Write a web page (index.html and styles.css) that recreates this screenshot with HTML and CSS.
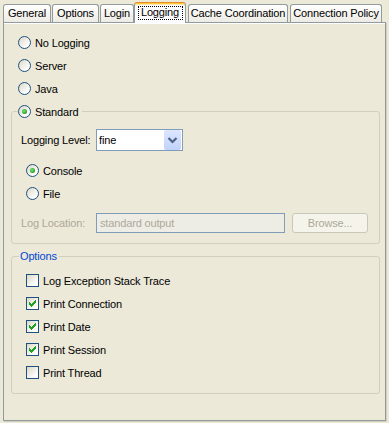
FILE: index.html
```html
<!DOCTYPE html>
<html>
<head>
<meta charset="utf-8">
<link rel="stylesheet" href="styles.css">
</head>
<body>
<div class="dialog">
  <div class="tabs">
    <div class="tab t-general">General</div>
    <div class="tab t-options">Options</div>
    <div class="tab t-login">Login</div>
    <div class="tab selected t-logging"><span class="focus">Logging</span></div>
    <div class="tab t-cache">Cache Coordination</div>
    <div class="tab t-conn">Connection Policy</div>
  </div>
  <div class="panel">
    <div class="row"><span class="radio"></span><span>No Logging</span></div>
    <div class="row"><span class="radio"></span><span>Server</span></div>
    <div class="row"><span class="radio"></span><span>Java</span></div>
    <fieldset class="group std">
      <legend class="row legend-radio"><span class="radio checked"></span><span>Standard</span></legend>
      <div class="field-row level">
        <label class="field-label">Logging Level:</label>
        <div class="combo">
          <span class="combo-text">fine</span>
          <span class="combo-btn"><svg width="17" height="20" viewBox="0 0 17 20"><path d="M4.5 8 L8.5 12 L12.5 8" fill="none" stroke="#4D6185" stroke-width="2.2"/></svg></span>
        </div>
      </div>
      <div class="row sub"><span class="radio checked"></span><span>Console</span></div>
      <div class="row sub"><span class="radio"></span><span>File</span></div>
      <div class="field-row location disabled">
        <label class="field-label">Log Location:</label>
        <div class="textbox">standard output</div>
        <div class="button">Browse...</div>
      </div>
    </fieldset>
    <fieldset class="group opts">
      <legend class="legend-text">Options</legend>
      <div class="row sub"><span class="check"></span><span>Log Exception Stack Trace</span></div>
      <div class="row sub"><span class="check"><svg class="tick" width="7" height="7" viewBox="0 0 7 7" shape-rendering="crispEdges"><path d="M6 0h1v1h-1z M5 1h2v1h-2z M0 2h1v1h-1z M4 2h3v1h-3z M0 3h2v1h-2z M3 3h3v1h-3z M0 4h5v1h-5z M1 5h3v1h-3z M2 6h1v1h-1z" fill="#21A121"/></svg></span><span>Print Connection</span></div>
      <div class="row sub"><span class="check"><svg class="tick" width="7" height="7" viewBox="0 0 7 7" shape-rendering="crispEdges"><path d="M6 0h1v1h-1z M5 1h2v1h-2z M0 2h1v1h-1z M4 2h3v1h-3z M0 3h2v1h-2z M3 3h3v1h-3z M0 4h5v1h-5z M1 5h3v1h-3z M2 6h1v1h-1z" fill="#21A121"/></svg></span><span>Print Date</span></div>
      <div class="row sub"><span class="check"><svg class="tick" width="7" height="7" viewBox="0 0 7 7" shape-rendering="crispEdges"><path d="M6 0h1v1h-1z M5 1h2v1h-2z M0 2h1v1h-1z M4 2h3v1h-3z M0 3h2v1h-2z M3 3h3v1h-3z M0 4h5v1h-5z M1 5h3v1h-3z M2 6h1v1h-1z" fill="#21A121"/></svg></span><span>Print Session</span></div>
      <div class="row sub"><span class="check"></span><span>Print Thread</span></div>
    </fieldset>
  </div>
</div>
</body>
</html>
```
FILE: styles.css
```css
* { box-sizing: border-box; }
html, body { margin: 0; padding: 0; }
body {
  background: #ECE9D8;
  font-family: "Liberation Sans", Arial, sans-serif;
  font-size: 11px;
  letter-spacing: -0.15px;
  color: #000;
  width: 389px;
  height: 423px;
  overflow: hidden;
}
.dialog { padding: 2px 0 0 3px; }

.tabs {
  display: flex;
  align-items: flex-end;
  height: 20px;
  position: relative;
  z-index: 2;
}
.tab {
  height: 18px;
  border: 1px solid #919B9C;
  border-bottom: none;
  border-radius: 3px 3px 0 0;
  background: linear-gradient(#FFFFFF, #F4F3EE 60%, #ECEBE5);
  text-align: center;
  line-height: 16px;
  white-space: nowrap;
}
.t-general { width: 48px; margin-right: 1px; }
.t-options { width: 47px; margin-right: 1px; }
.t-login { width: 34px; }
.t-logging { width: 52px; margin-right: 2px; }
.t-cache { width: 100px; margin-right: 2px; }
.t-conn { width: 92px; }
.tab.selected {
  height: 21px;
  margin-bottom: -1px;
  border-top: 1px solid #E68B2C;
  box-shadow: inset 0 1px 0 #FFC73C, inset 0 2px 0 #FFE9A8;
  background: #FCFCFE;
  line-height: 17px;
  padding-top: 3px;
}
.focus {
  display: inline-block;
  width: 45px;
  height: 14px;
  outline: 1px dotted #000;
  outline-offset: -1px;
  line-height: 13px;
  vertical-align: top;
}

.panel {
  width: 383px;
  height: 399px;
  border: 1px solid #919B9C;
  box-shadow: 1px 1px 0 #D0CEBF, inset 0 1px 0 #FFFFFF;
  background: #ECE9D8;
  padding: 8px 5px 0 7px;
  position: relative;
  z-index: 1;
}

.row {
  display: flex;
  align-items: center;
  height: 23px;
  padding-left: 7px;
}
.row.sub { padding-left: 5px; }

.radio {
  width: 13px;
  height: 13px;
  border-radius: 50%;
  border: 1px solid #1C5180;
  background: linear-gradient(135deg, #DCD8C5, #FFFFFF 80%);
  margin-right: 4px;
  flex: none;
  display: flex;
  align-items: center;
  justify-content: center;
}
.radio.checked::after {
  content: "";
  width: 5px;
  height: 5px;
  border-radius: 50%;
  background: radial-gradient(circle at 40% 40%, #7BE37B, #21A121 70%);
}
.check {
  width: 13px;
  height: 13px;
  border: 1px solid #1C5180;
  background: linear-gradient(135deg, #DCD8C5, #FFFFFF 80%);
  margin-right: 4px;
  flex: none;
  display: flex;
  padding: 2px 0 0 2px;
}
.tick { display: block; }

.group {
  margin: 0;
  border: 1px solid #D0D0BF;
  border-radius: 3px;
  padding: 0 8px 0 9px;
  min-width: 0;
}
.group.std { padding-bottom: 10px; }
.legend-radio {
  padding: 0 4px 0 0;
  margin-left: -3px;
  height: 23px;
}
.legend-radio.row { padding-left: 0; }
.legend-text {
  color: #0046D5;
  padding: 0 2px 0 1px;
  margin-left: -2px;
  line-height: 13px;
}

.field-row {
  display: flex;
  align-items: center;
}
.field-label { width: 75px; flex: none; }
.level { height: 22px; margin-top: 6px; margin-bottom: 8px; }
.combo {
  width: 87px;
  height: 22px;
  border: 1px solid #7F9DB9;
  background: #fff;
  display: flex;
  align-items: center;
  padding: 0 1px 0 2px;
}
.combo-text { flex: 1; }
.combo-btn {
  width: 17px;
  height: 20px;
  background: linear-gradient(#DCE6FD, #C1D3FB);
  border-radius: 2px;
  display: flex;
}
.location { height: 20px; margin-top: 8px; }
.disabled { color: #ACA899; }
.textbox {
  width: 189px;
  height: 20px;
  border: 1px solid #7F9DB9;
  background: #EEEDE5;
  padding-left: 3px;
  line-height: 18px;
}
.button {
  width: 76px;
  height: 20px;
  margin-left: 7px;
  border: 1px solid #C9C7BA;
  border-radius: 3px;
  background: #F5F4EA;
  text-align: center;
  line-height: 18px;
}

.group.opts {
  margin-top: 6px;
  padding-top: 6px;
  padding-bottom: 9px;
}
```
